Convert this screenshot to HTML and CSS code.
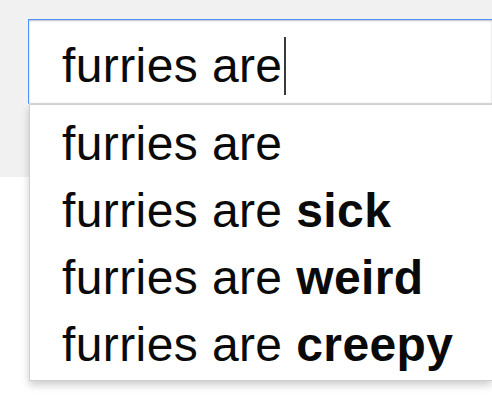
FILE: index.html
```html
<!DOCTYPE html>
<html>
<head>
<meta charset="utf-8">
<link rel="stylesheet" href="styles.css">
</head>
<body>
<div class="header">
  <div class="search">
    <span class="query">furries are</span><span class="caret"></span>
  </div>
  <ul class="suggest">
    <li>furries are</li>
    <li>furries are <b>sick</b></li>
    <li>furries are <b>weird</b></li>
    <li>furries are <b>creepy</b></li>
  </ul>
</div>
</body>
</html>
```
FILE: styles.css
```css
html, body {
  margin: 0;
  padding: 0;
  background: #ffffff;
  overflow: hidden;
}
body {
  width: 492px;
  height: 400px;
  font-family: "Liberation Sans", Arial, sans-serif;
  color: #0a0a0a;
}
.header {
  position: relative;
  height: 177px;
  background: #f1f1f1;
  padding: 19px 0 0 28px;
  box-sizing: border-box;
}
.search {
  width: 464px;
  height: 85px;
  box-sizing: border-box;
  border: 1px solid #4d90fe;
  border-right: none;
  border-bottom-color: #d9d9d9;
  background: #fff;
  box-shadow: inset 0 1px 2px rgba(0,0,0,0.25);
  padding: 8px 0 0 33px;
  font-size: 48px;
  letter-spacing: 0.4px;
  line-height: 75px;
  white-space: nowrap;
}
.caret {
  display: inline-block;
  width: 2px;
  height: 58px;
  background: #3a3a3a;
  margin-left: 2px;
  vertical-align: -13px;
}
.suggest {
  position: absolute;
  top: 104px;
  left: 29px;
  width: 463px;
  box-sizing: border-box;
  margin: 0;
  padding: 5px 0 2px 32px;
  list-style: none;
  background: #fff;
  border: 1px solid #cfcfcf;
  border-right: none;
  box-shadow: 0 4px 8px rgba(0,0,0,0.2);
  font-size: 48px;
  letter-spacing: 0.4px;
  line-height: 67px;
  white-space: nowrap;
  z-index: 2;
}
.suggest b {
  font-weight: bold;
}
```
